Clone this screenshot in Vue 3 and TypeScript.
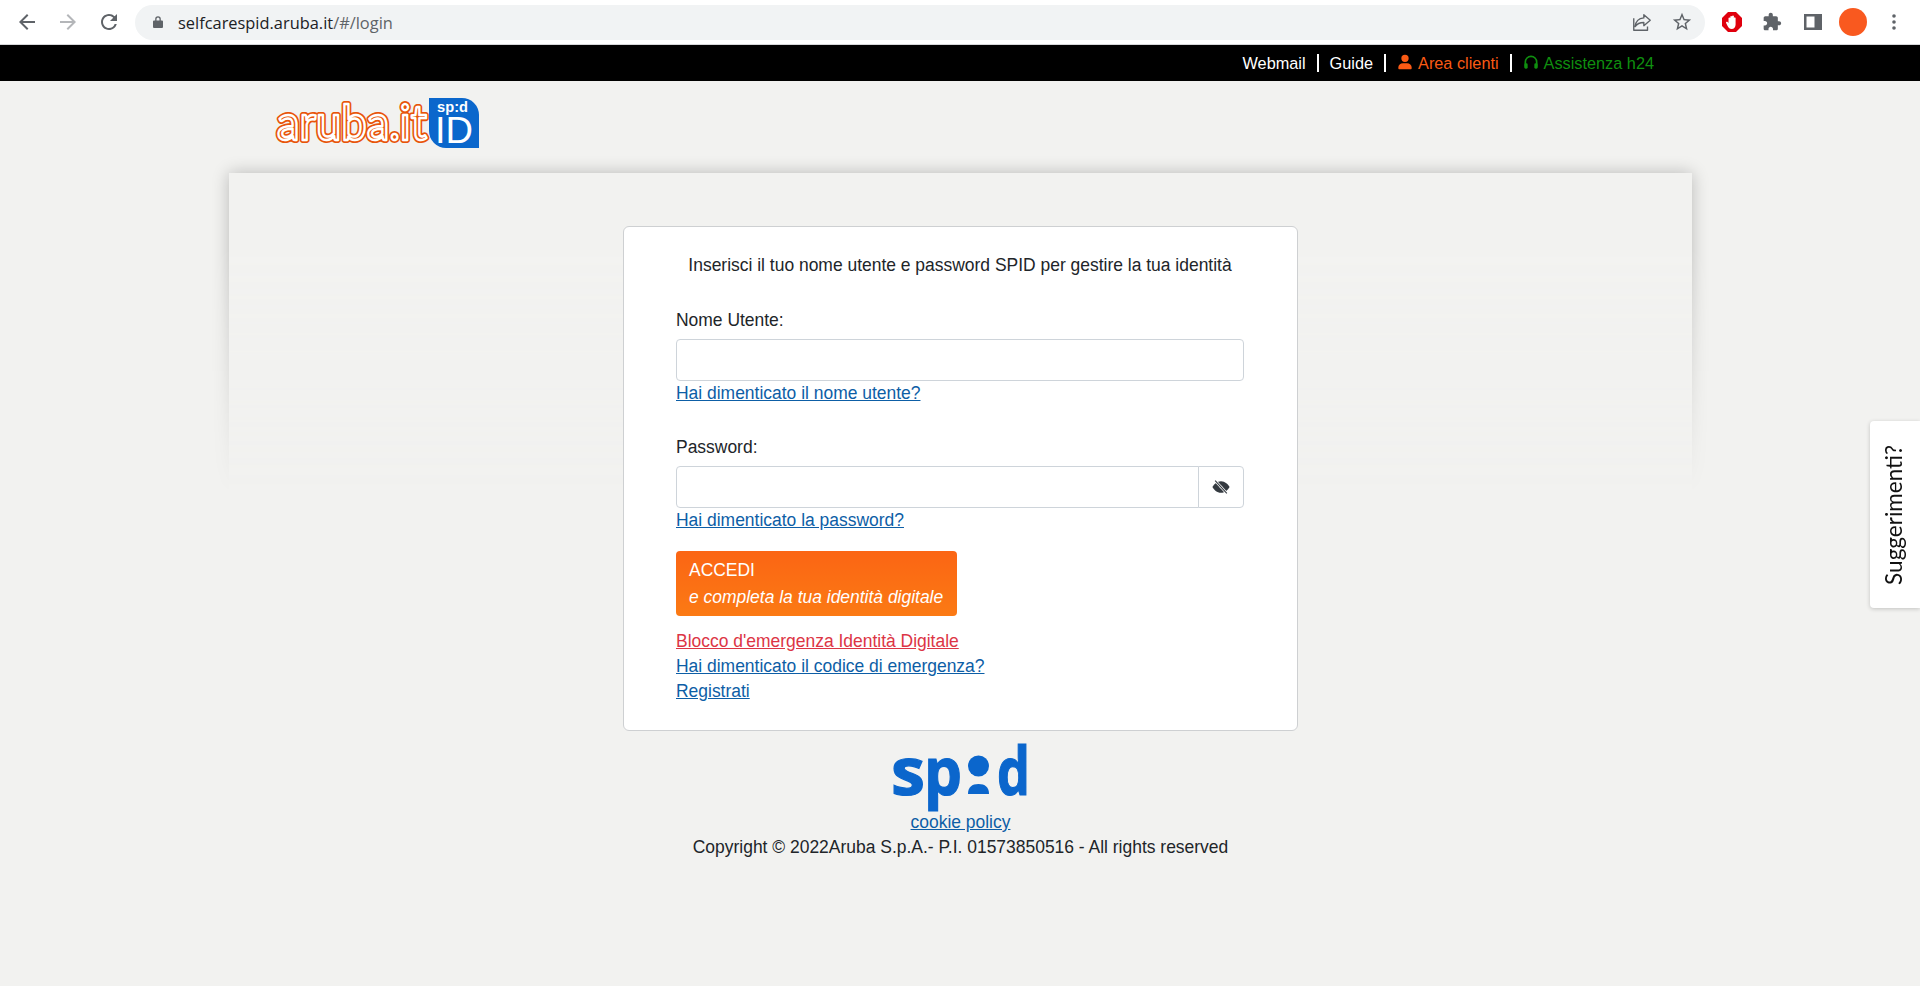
<template>
  <div class="page">
    <div class="browser">
      <div class="nav-btns">
        <svg class="ico" viewBox="0 0 24 24"><path d="M20 11H7.83l5.59-5.59L12 4l-8 8 8 8 1.41-1.41L7.83 13H20v-2z" /></svg>
        <svg class="ico ico-off" viewBox="0 0 24 24"><path d="M4 11h12.17l-5.59-5.59L12 4l8 8-8 8-1.41-1.41L16.17 13H4v-2z" /></svg>
        <svg class="ico" viewBox="0 0 24 24"><path d="M17.65 6.35A7.958 7.958 0 0 0 12 4c-4.42 0-7.99 3.58-7.99 8s3.57 8 7.99 8c3.73 0 6.84-2.55 7.73-6h-2.08A5.99 5.99 0 0 1 12 18c-3.31 0-6-2.69-6-6s2.69-6 6-6c1.66 0 3.14.69 4.22 1.78L13 11h7V4l-2.35 2.35z" /></svg>
      </div>
      <div class="omnibox">
        <svg class="lock" viewBox="0 0 12 14"><path d="M3.2 5.5V4a2.8 2.8 0 0 1 5.6 0v1.500h-1.300V4a1.500 1.500 0 0 0-3 0v1.500zM2 5.500h8a1 1 0 0 1 1 1V12a1 1 0 0 1-1 1H2a1 1 0 0 1-1-1V6.500a1 1 0 0 1 1-1z" /></svg>
        <span class="url">selfcarespid.aruba.it<span class="url-path">/#/login</span></span>
        <svg class="share" viewBox="0 0 24 24"><path d="M14 4l7 6-7 6v-3.500c-4.500 0-7.500 1.500-9.500 4.500.5-5 3.500-9 9.500-9.500z M3 8v13h15v-4" fill="none" stroke="#5f6368" stroke-width="1.500" stroke-linejoin="round" /></svg>
        <svg class="star" viewBox="0 0 24 24"><path d="M22 9.240l-7.190-.62L12 2 9.190 8.630 2 9.240l5.460 4.730L5.820 21 12 17.270 18.180 21l-1.630-7.030L22 9.240zM12 15.400l-3.760 2.270 1-4.280-3.320-2.880 4.380-.38L12 6.100l1.710 4.040 4.380.38-3.320 2.880 1 4.280L12 15.400z" /></svg>
      </div>
      <div class="ext-btns">
        <svg class="ext" viewBox="0 0 22 22">
          <path d="M7 1h8l6 6v8l-6 6H7l-6-6V7z" fill="#e0000d" />
          <path d="M7.500 12V7a1 1 0 0 1 1.800 0v3V5.500a1 1 0 0 1 1.800 0V10V5a1 1 0 0 1 1.800 0v5.500V7a1 1 0 0 1 1.700 0v6.500c0 2.500-1.500 4.500-4 4.500-2 0-3-1-4-3l-1.500-3c-.5-1 1-1.800 1.700-.8z" fill="#fff" />
        </svg>
        <svg class="ico ext-puzzle" viewBox="0 0 24 24"><path d="M20.500 11H19V7c0-1.100-.9-2-2-2h-4V3.500C13 2.120 11.880 1 10.500 1S8 2.120 8 3.500V5H4c-1.100 0-1.990.9-1.990 2v3.800H3.500c1.490 0 2.700 1.210 2.700 2.700s-1.210 2.700-2.700 2.700H2V20c0 1.100.9 2 2 2h3.800v-1.500c0-1.490 1.210-2.700 2.700-2.700 1.490 0 2.700 1.210 2.700 2.700V22H17c1.100 0 2-.9 2-2v-4h1.500c1.380 0 2.500-1.120 2.500-2.500S21.880 11 20.500 11z" /></svg>
        <svg class="side" viewBox="0 0 18 16"><path fill-rule="evenodd" d="M0 0h18v16H0zM2.500 2.500v11h8v-11z" /></svg>
        <span class="avatar"></span>
        <svg class="dots" viewBox="0 0 4 16"><circle cx="2" cy="2" r="1.800" /><circle cx="2" cy="8" r="1.800" /><circle cx="2" cy="14" r="1.800" /></svg>
      </div>
    </div>

    <div class="topbar">
      <a class="top-link">Webmail</a>
      <i class="sep"></i>
      <a class="top-link">Guide</a>
      <i class="sep"></i>
      <a class="top-link orange">
        <svg class="top-ico" viewBox="0 0 24 24"><path d="M12 12a5.500 5.500 0 1 0 0-11 5.500 5.500 0 0 0 0 11zm-3 2c-4 0-7 2.500-7 6v1.500c0 .8.700 1.500 1.500 1.500h17c.8 0 1.500-.7 1.500-1.500V20c0-3.500-3-6-7-6z" /></svg>
        Area clienti
      </a>
      <i class="sep"></i>
      <a class="top-link green">
        <svg class="top-ico" viewBox="0 0 24 24"><path d="M3.500 19v-7a8.500 8.500 0 0 1 17 0v7" fill="none" stroke="currentColor" stroke-width="2.500" /><rect x="2" y="14" width="5" height="8" rx="2" /><rect x="17" y="14" width="5" height="8" rx="2" /></svg>
        Assistenza h24
      </a>
    </div>

    <header class="brand">
      <svg class="brand-logo" viewBox="0 0 206 52" role="img" aria-label="aruba.it spid ID">
        <text class="aruba" x="3" y="43" textLength="150" lengthAdjust="spacingAndGlyphs">aruba.it</text>
        <text class="aruba-core" x="3" y="43" textLength="150" lengthAdjust="spacingAndGlyphs" aria-hidden="true">aruba.it</text>
        <path d="M155 1h33a17 17 0 0 1 17 17v33h-33a17 17 0 0 1-17-17z" fill="#0b67cc" />
        <text class="badge-small" x="163" y="15" textLength="31" lengthAdjust="spacingAndGlyphs">sp:d</text>
        <text class="badge-big" x="161" y="46" textLength="38" lengthAdjust="spacingAndGlyphs">ID</text>
      </svg>
    </header>

    <main class="panel">
      <div class="panel-shadow"></div>
      <section class="card">
        <p class="intro">Inserisci il tuo nome utente e password SPID per gestire la tua identità</p>

        <label class="field-label">Nome Utente:</label>
        <input v-model="username" class="input" type="text" />
        <a class="link">Hai dimenticato il nome utente?</a>

        <label class="field-label second">Password:</label>
        <div class="input-group">
          <input v-model="password" class="input group-input" :type="showPassword ? 'text' : 'password'" />
          <button class="eye-btn" type="button" @click="showPassword = !showPassword">
            <svg class="eye" viewBox="0 0 20 16">
              <path d="M10 1.500c-4.500 0-8 3.500-9.500 6.500C2 11 5.500 14.500 10 14.500S18 11 19.500 8C18 5 14.500 1.500 10 1.500z" />
              <circle cx="10" cy="8" r="1.500" fill="#fff" />
              <path d="M3.500 1l13 14" stroke="#fff" stroke-width="2.800" />
              <path d="M3.500 1l13 14" stroke="#343a40" stroke-width="1.200" />
            </svg>
          </button>
        </div>
        <a class="link">Hai dimenticato la password?</a>

        <button class="submit" type="button">
          <span class="submit-main">ACCEDI</span>
          <em class="submit-sub">e completa la tua identità digitale</em>
        </button>

        <div class="more-links">
          <a v-for="item in extraLinks" :key="item.label" class="link" :class="{ danger: item.danger }">{{ item.label }}</a>
        </div>
      </section>

      <svg class="spid-logo" viewBox="0 0 135 66" role="img" aria-label="spid">
        <text class="spid-text" x="-2" y="51" textLength="34" lengthAdjust="spacingAndGlyphs">s</text>
        <text class="spid-text" x="31" y="51" textLength="38" lengthAdjust="spacingAndGlyphs">p</text>
        <circle cx="85.500" cy="22" r="10.500" fill="#0b66cc" />
        <path d="M75 50c0-7 4-10 10.500-10S96 43 96 50z" fill="#0b66cc" />
        <text class="spid-text" x="104" y="51" textLength="33" lengthAdjust="spacingAndGlyphs">d</text>
      </svg>
      <a class="link cookie">cookie policy</a>
      <p class="copyright">Copyright © 2022Aruba S.p.A.- P.I. 01573850516 - All rights reserved</p>
    </main>

    <aside class="feedback"><span>Suggerimenti?</span></aside>
  </div>
</template>

<script setup lang="ts">
import { ref } from 'vue'

const username = ref('')
const password = ref('')
const showPassword = ref(false)

const extraLinks = [
  { label: "Blocco d'emergenza Identità Digitale", danger: true },
  { label: 'Hai dimenticato il codice di emergenza?', danger: false },
  { label: 'Registrati', danger: false },
]
</script>

<style>
html, body { margin: 0; background: #f2f2f0; }
</style>

<style scoped>
.page {
  position: relative; height: 986px; overflow: hidden; background: #f2f2f0;
  font-family: "Liberation Sans", Arial, sans-serif; font-size: 17.47px; color: #212529;
}

/* browser chrome */
.browser {
  height: 44px; background: #fff; border-bottom: 1px solid #d6d7d9;
  display: flex; align-items: center;
}
.nav-btns { width: 135px; display: flex; align-items: center; gap: 17px; padding-left: 15px; box-sizing: border-box; }
.ico { width: 24px; height: 24px; fill: #5f6368; flex: none; }
.ico-off { fill: #b4b6b9; }
.omnibox {
  width: 1570px; height: 35px; border-radius: 18px; background: #f1f3f4;
  display: flex; align-items: center; box-sizing: border-box; padding-left: 17px;
}
.lock { width: 12px; height: 14px; fill: #5f6368; flex: none; }
.url { margin-left: 14px; font-family: "Open Sans", sans-serif; font-size: 16.4px; color: #202124; flex: 1; }
.url-path { color: #5f6368; }
.share { width: 22px; height: 22px; flex: none; margin-right: 18px; }
.star { width: 22px; height: 22px; fill: #5f6368; flex: none; margin-right: 12px; }
.ext-btns { flex: 1; display: flex; align-items: center; padding-left: 16px; }
.ext { width: 22px; height: 22px; flex: none; }
.ext-puzzle { width: 20px; height: 20px; margin-left: 19px; }
.side { width: 18px; height: 16px; fill: #5f6368; margin-left: 22px; }
.avatar { width: 28px; height: 28px; border-radius: 50%; background: #f9591f; margin-left: 17px; }
.dots { width: 4px; height: 16px; fill: #5f6368; margin-left: 25px; }

/* black link bar */
.topbar {
  height: 36px; background: #000; display: flex; justify-content: flex-end; align-items: center;
  padding-right: 266px; color: #fff; font-size: 16.3px;
}
.top-link { display: inline-flex; align-items: center; gap: 5px; }
.orange { color: #fa5a14; }
.green { color: #0f8f0f; }
.top-ico { width: 16px; height: 16px; fill: currentColor; margin-top: -2px; }
.sep { width: 2px; height: 18px; background: #fff; margin: 0 11px; }

.brand { height: 92px; padding-left: 274px; box-sizing: border-box; padding-top: 16px; }
.brand-logo { display: block; width: 206px; height: 52px; overflow: visible; }
.aruba, .aruba-core {
  font-family: "Lato", sans-serif; font-weight: 400; font-size: 48px; fill: none;
  stroke-linejoin: round; stroke-linecap: round;
}
.aruba { stroke: #e8540a; stroke-width: 6px; }
.aruba-core { stroke: #fff; stroke-width: 2.400px; }
.badge-small { font-family: "Liberation Sans", sans-serif; font-weight: 700; font-size: 15px; fill: #fff; }
.badge-big { font-family: "Liberation Sans", sans-serif; font-size: 37px; fill: #fff; }

/* main panel */
.panel {
  position: relative; width: 1463px; margin-left: 229px; padding-top: 53px;
  display: flex; flex-direction: column; align-items: center;
}
.panel-shadow {
  position: absolute; top: -30px; left: -30px; right: -30px; height: 350px; overflow: hidden;
  -webkit-mask-image: linear-gradient(#000 30%, transparent 100%);
  mask-image: linear-gradient(#000 30%, transparent 100%);
}
.panel-shadow::before {
  content: ""; position: absolute; top: 30px; left: 30px; right: 30px; bottom: -30px;
  background: #f2f2f0; box-shadow: 0 0 16px rgba(0, 0, 0, 0.24);
}
.card {
  position: relative; width: 675px; box-sizing: border-box; background: #fff;
  border: 1px solid #ced0d2; border-radius: 6px; padding: 26px 53px 26px 52px;
  display: flex; flex-direction: column; align-items: flex-start; line-height: 24px;
}
.intro { margin: 0 0 31px; width: 100%; text-align: center; white-space: nowrap; }
.field-label { margin-bottom: 7px; }
.field-label.second { margin-top: 30px; }
.input {
  width: 100%; height: 42px; box-sizing: border-box; border: 1px solid #ced4da; border-radius: 4px;
  background: #fff; outline: none; padding: 6px 12px; font: inherit;
}
.input-group { display: flex; width: 100%; }
.group-input { flex: 1; width: auto; min-width: 0; border-radius: 4px 0 0 4px; }
.eye-btn {
  width: 46px; height: 42px; padding: 0; margin-left: -1px; background: #fff;
  border: 1px solid #ced4da; border-radius: 0 4px 4px 0;
  display: flex; align-items: center; justify-content: center;
}
.eye { width: 18px; height: 16px; fill: #343a40; }
.link { color: #0d5ea6; text-decoration: underline; }
.link.danger { color: #dc3545; }
.submit {
  margin-top: 19px; height: 65px; width: 281px; box-sizing: border-box; padding: 6px 13px;
  border: 0; border-radius: 4px; color: #fff; font: inherit; text-align: left; white-space: nowrap;
  background: linear-gradient(#fb6514, #fb7a14);
  display: flex; flex-direction: column; justify-content: center; gap: 3px;
}
.submit-sub { font-style: italic; }
.more-links { margin-top: 13px; display: flex; flex-direction: column; align-items: flex-start; line-height: 25px; }

.spid-logo { position: relative; display: block; width: 135px; height: 66px; margin-top: 13px; overflow: visible; }
.spid-text {
  font-family: "Open Sans", sans-serif; font-weight: 700; font-size: 66px; fill: #0b66cc;
  stroke: #0b66cc; stroke-width: 1.200px;
}
.cookie { line-height: 24px; }
.copyright { margin: 1px 0 0; line-height: 24px; }

.feedback {
  position: absolute; right: 0; top: 421px; width: 50px; height: 187px;
  background: #fff; border-radius: 4px 0 0 4px; box-shadow: 0 1px 4px rgba(0, 0, 0, 0.2);
  display: flex; align-items: center; justify-content: center;
  font-family: "Lato", sans-serif; font-size: 22.5px; color: #111;
}
.feedback span { writing-mode: vertical-rl; transform: rotate(180deg); margin-right: 3px; }
</style>
